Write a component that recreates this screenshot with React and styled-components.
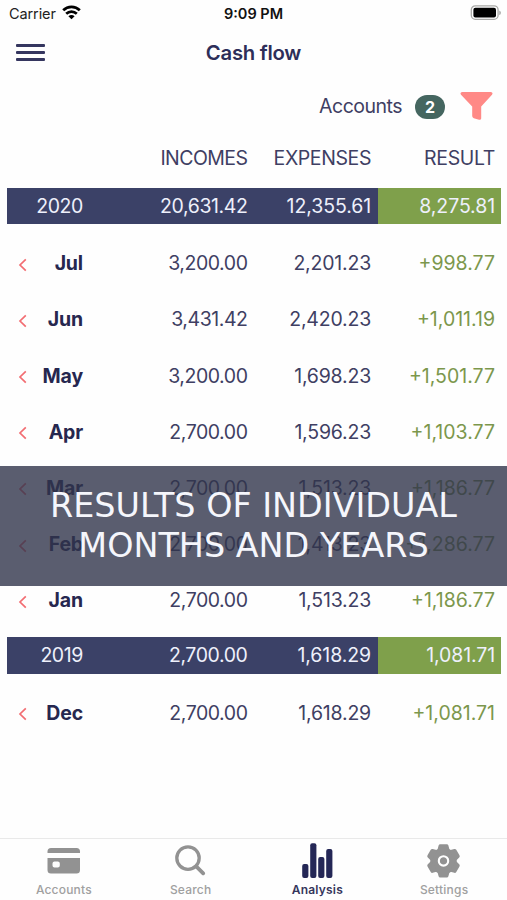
import React from 'react';
import styled, { createGlobalStyle } from 'styled-components';

const rows = [
    { year: '2020', incomes: '20,631.42', expenses: '12,355.61', result: '8,275.81' },
    { month: 'Jul', incomes: '3,200.00', expenses: '2,201.23', result: '+998.77' },
    { month: 'Jun', incomes: '3,431.42', expenses: '2,420.23', result: '+1,011.19' },
    { month: 'May', incomes: '3,200.00', expenses: '1,698.23', result: '+1,501.77' },
    { month: 'Apr', incomes: '2,700.00', expenses: '1,596.23', result: '+1,103.77' },
    { month: 'Mar', incomes: '2,700.00', expenses: '1,513.23', result: '+1,186.77' },
    { month: 'Feb', incomes: '2,700.00', expenses: '1,413.23', result: '+1,286.77' },
    { month: 'Jan', incomes: '2,700.00', expenses: '1,513.23', result: '+1,186.77' },
    { year: '2019', incomes: '2,700.00', expenses: '1,618.29', result: '1,081.71' },
    { month: 'Dec', incomes: '2,700.00', expenses: '1,618.29', result: '+1,081.71' },
];

const tabs = [
    { label: 'Accounts', Icon: CardIcon },
    { label: 'Search', Icon: SearchIcon },
    { label: 'Analysis', Icon: ChartIcon, active: true },
    { label: 'Settings', Icon: GearIcon },
];

function WifiIcon() {
    return (
        <svg width="19" height="15" viewBox="0 0 19 15" fill="none" stroke="#000" strokeWidth="2.7">
            <path d="M1.2 5.3C5.8 0.6 13.2 0.6 17.8 5.3" />
            <path d="M4.2 8.8C7.2 5.9 11.8 5.9 14.8 8.8" />
            <path d="M9.5 14.3L6.4 11.3C8.1 9.7 10.9 9.7 12.6 11.3Z" fill="#000" stroke="none" />
        </svg>
    );
}

function BatteryIcon() {
    return (
        <svg width="31" height="16" viewBox="0 0 31 16">
            <rect x="-0.7" y="0.9" width="26.8" height="13.4" rx="4" fill="#fff" stroke="#a9a9a7" strokeWidth="1.3" />
            <rect x="1.4" y="2.8" width="22.6" height="9.6" rx="2" fill="#000" />
            <path d="M27.3 5.4C29.3 6.2 29.3 9.2 27.3 10Z" fill="#a0a09e" />
        </svg>
    );
}

function FilterIcon() {
    return (
        <svg width="33" height="29" viewBox="0 0 33 29" fill="#ff8986">
            <path d="M2 0H31Q33.4 0.7 32 2.8L21.2 14.5V26.5Q20.9 28.3 19 27.7L13.8 26.3Q12.2 25.5 12.2 24V14.5L1 2.8Q-0.4 0.7 2 0Z" />
        </svg>
    );
}

function ChevronIcon() {
    return (
        <svg width="9" height="14" viewBox="0 0 9 14" fill="none" stroke="#f26d72" strokeWidth="1.7">
            <path d="M7.8 1.3L2 7L7.8 12.7" />
        </svg>
    );
}

function CardIcon() {
    return (
        <svg width="33" height="36" viewBox="0 0 33 36" fill="#929292">
            <path d="M0.5 14V12.5Q0.5 9 4 9H29.5Q33 9 33 12.5V14Z" />
            <path fillRule="evenodd" d="M0.5 19H33V31Q33 34.5 29.5 34.5H4Q0.5 34.5 0.5 31ZM7.5 22.5Q5.5 22.5 5.5 24.5V26.5Q5.5 28.5 7.5 28.5H10.8Q12.8 28.5 12.8 26.5V24.5Q12.8 22.5 10.8 22.5Z" />
        </svg>
    );
}

function SearchIcon() {
    return (
        <svg width="32" height="36" viewBox="0 0 32 36" fill="none" stroke="#929292" strokeWidth="3.3">
            <circle cx="13" cy="19.1" r="11.2" />
            <path d="M21.2 27.3L28.2 34.3" strokeWidth="3.8" strokeLinecap="round" />
        </svg>
    );
}

function ChartIcon() {
    return (
        <svg width="32" height="36" viewBox="0 0 32 36" fill="#242756">
            <rect x="1.2" y="25" width="6.2" height="14" rx="2" />
            <rect x="9.2" y="4.3" width="6.2" height="34.7" rx="2" />
            <rect x="17.2" y="18" width="6.2" height="21" rx="2" />
            <rect x="25.2" y="9.9" width="6.2" height="29.1" rx="2" />
        </svg>
    );
}

function GearIcon() {
    return (
        <svg width="34" height="36" viewBox="0 0 34 36">
            <g transform="translate(16.5 21.9)">
                <g fill="#929292">
                    <circle r="13.2" />
                    {[0, 60, 120, 180, 240, 300].map(angle => (
                        <path key={angle} transform={`rotate(${angle})`} d="M-6.2 -10.5L-4.9 -15.3Q-4.6 -16.6 -3.2 -16.6H3.2Q4.6 -16.6 4.9 -15.3L6.2 -10.5Z" />
                    ))}
                </g>
                <circle r="4.7" fill="none" stroke="#fff" strokeWidth="2.1" />
            </g>
        </svg>
    );
}

export default function App() {
    return (
        <Screen>
            <GlobalStyle />
            <StatusBar>
                <Carrier>Carrier <WifiIcon /></Carrier>
                <Clock>9:09 PM</Clock>
                <BatteryIcon />
            </StatusBar>
            <Header>
                <MenuButton aria-label="menu">
                    <i /><i /><i />
                </MenuButton>
                <Title>Cash flow</Title>
            </Header>
            <FilterBar>
                <span>Accounts</span>
                <Badge>2</Badge>
                <FilterIcon />
            </FilterBar>
            <TableHead>
                <Cell />
                <Cell $spacing="-0.55px">INCOMES</Cell>
                <Cell $spacing="-0.4px">EXPENSES</Cell>
                <Cell $last $spacing="-0.35px">RESULT</Cell>
            </TableHead>
            <Table>
                {rows.map(row => row.year ? (
                    <YearRow key={row.year}>
                        <Cell $spacing="-0.4px">{row.year}</Cell>
                        <Cell $spacing="-0.4px">{row.incomes}</Cell>
                        <Cell $spacing="-0.1px">{row.expenses}</Cell>
                        <YearResult $last $spacing="-0.1px">{row.result}</YearResult>
                    </YearRow>
                ) : (
                    <MonthRow key={row.month}>
                        <MonthCell><ChevronIcon />{row.month}</MonthCell>
                        <Cell $spacing="-0.45px">{row.incomes}</Cell>
                        <Cell $spacing="-0.2px">{row.expenses}</Cell>
                        <MonthResult $last>{row.result}</MonthResult>
                    </MonthRow>
                ))}
            </Table>
            <TabBar>
                {tabs.map(({ label, Icon, active }) => (
                    <Tab key={label} $active={active}>
                        <Icon />
                        <span>{label}</span>
                    </Tab>
                ))}
            </TabBar>
            <Caption>
                <CaptionLine>RESULTS OF INDIVIDUAL</CaptionLine>
                <CaptionLine>MONTHS AND YEARS</CaptionLine>
            </Caption>
        </Screen>
    );
}

const GlobalStyle = createGlobalStyle`
    body {
        margin: 0;
        background: #fefefe;
    }
    * {
        box-sizing: border-box;
    }
    svg {
        display: block;
        flex: none;
        overflow: visible;
    }
`

const Screen = styled.div`
    position: relative;
    display: flex;
    flex-direction: column;
    width: 507px;
    height: 900px;
    overflow: hidden;
    background: #fefefe;
    color: #3f3f63;
    font-family: Inter, "Liberation Sans", sans-serif;
    font-size: 19.5px;
`

const StatusBar = styled.div`
    display: grid;
    grid-template-columns: 1fr auto 1fr;
    align-items: center;
    height: 27px;
    padding: 0 4px 0 9px;
    color: #222;
    font-size: 14.5px;
    > svg {
        justify-self: end;
        margin-top: -1px;
    }
`

const Carrier = styled.div`
    display: flex;
    align-items: center;
    gap: 6px;
    letter-spacing: -0.1px;
    svg {
        margin-top: -2px;
    }
`

const Clock = styled.div`
    font-weight: 600;
    color: #111;
    margin-right: 5px;
`

const Header = styled.div`
    display: grid;
    grid-template-columns: 29px 1fr 29px;
    align-items: center;
    height: 50px;
    padding: 0 16px;
`

const MenuButton = styled.button`
    display: flex;
    flex-direction: column;
    gap: 4.5px;
    width: 29px;
    padding: 1px 0 0;
    border: 0;
    background: none;
    i {
        height: 2.7px;
        border-radius: 1px;
        background: #35365f;
    }
`

const Title = styled.h1`
    margin: 0;
    text-align: center;
    font-size: 20.3px;
    font-weight: 600;
    letter-spacing: -0.25px;
    color: #2d2e59;
`

const FilterBar = styled.div`
    display: flex;
    align-items: center;
    justify-content: flex-end;
    height: 58px;
    padding-right: 14px;
    letter-spacing: -0.5px;
    > svg {
        margin-left: 15px;
    }
`

const Badge = styled.span`
    display: grid;
    place-items: center;
    width: 30px;
    height: 24px;
    margin: 2px 0 0 13px;
    border-radius: 12px;
    background: #456660;
    color: #fff;
    font-size: 16px;
    font-weight: 700;
    letter-spacing: 0;
`

const Grid = styled.div`
    display: grid;
    grid-template-columns: 83px 164.5px 123.5px 1fr;
    align-items: center;
    margin: 0 6px 0 7px;
`

const TableHead = styled(Grid)`
    height: 46px;
`

const Table = styled.div`
    display: flex;
    flex-direction: column;
    padding-top: 7px;
`

const YearRow = styled(Grid)`
    height: 36.6px;
    margin-top: 9.8px;
    margin-bottom: 9.8px;
    background: #3b4167;
    color: #eef0fb;
    line-height: 36.6px;
    &:first-child {
        margin-top: -0.3px;
    }
`

const MonthRow = styled(Grid)`
    height: 56.2px;
    padding-top: 2px;
`

const Cell = styled.div`
    padding-right: ${props => props.$last ? '6px' : '7px'};
    text-align: right;
    letter-spacing: ${props => props.$spacing || '0'};
    white-space: nowrap;
    ${YearRow} & {
        padding-top: 1px;
        line-height: 35.6px;
    }
`

const YearResult = styled(Cell)`
    background: #7fa04b;
`

const MonthCell = styled(Cell)`
    display: flex;
    align-items: center;
    justify-content: space-between;
    padding-left: 11px;
    font-weight: 700;
    letter-spacing: -0.15px;
    color: #26274f;
    svg {
        margin-top: 3px;
    }
`

const MonthResult = styled(Cell)`
    color: #7c974c;
`

const TabBar = styled.div`
    display: grid;
    grid-template-columns: repeat(4, 1fr);
    height: 62px;
    margin-top: auto;
    border-top: 1px solid #e9e9e9;
`

const Tab = styled.div`
    display: flex;
    flex-direction: column;
    align-items: center;
    padding-left: 1px;
    color: ${props => props.$active ? '#35365c' : '#a0a0a0'};
    font-size: 12px;
    font-weight: ${props => props.$active ? 600 : 500};
    letter-spacing: 0.2px;
    span {
        margin-top: 7px;
        line-height: 16px;
    }
`

const Caption = styled.div`
    position: absolute;
    top: 466px;
    left: 0;
    width: 100%;
    height: 120px;
    padding-top: 20px;
    background: rgba(49, 52, 75, 0.8);
    color: #f5f6fc;
    font-family: "DejaVu Sans", sans-serif;
    font-size: 33.4px;
    text-align: center;
`

const CaptionLine = styled.div`
    line-height: 40px;
    white-space: nowrap;
`
